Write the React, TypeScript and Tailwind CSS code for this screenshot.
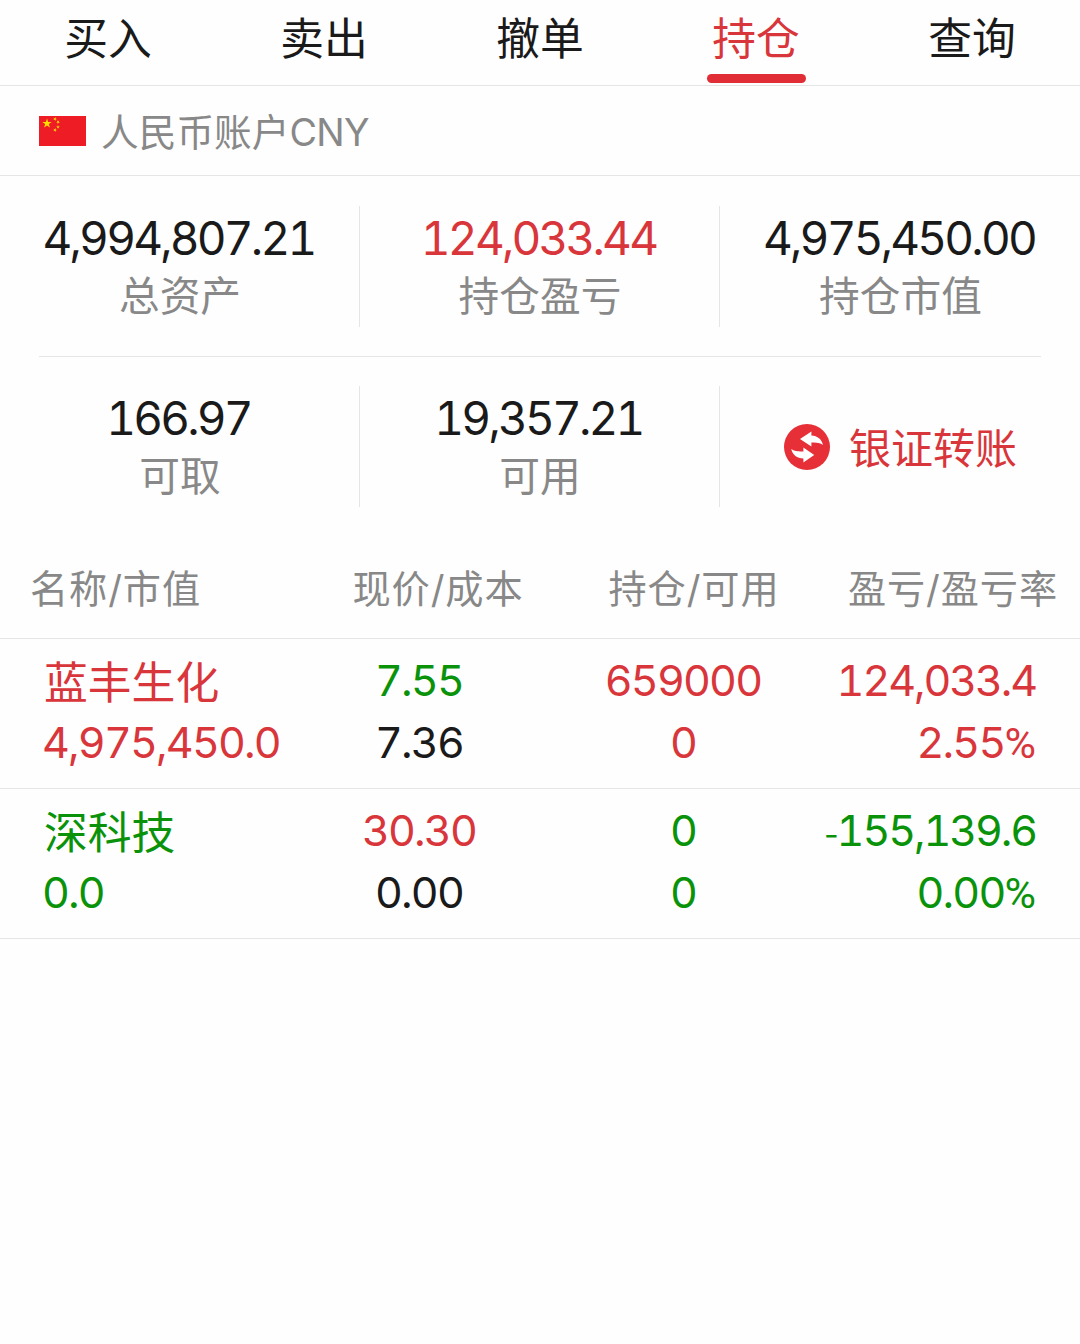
import React from 'react';

const tabs = ['买入', '卖出', '撤单', '持仓', '查询'];

const RED = 'text-[#d9363c]';
const GREEN = 'text-[#0a930a]';
const DARK = 'text-[#1a1a1a]';

const positions = [
  {
    name: '蓝丰生化',
    value: '4,975,450.0',
    price: '7.55',
    cost: '7.36',
    held: '659000',
    available: '0',
    profit: '124,033.4',
    rate: '2.55',
    color: RED,
    priceColor: GREEN,
  },
  {
    name: '深科技',
    value: '0.0',
    price: '30.30',
    cost: '0.00',
    held: '0',
    available: '0',
    profit: '-155,139.6',
    rate: '0.00',
    color: GREEN,
    priceColor: RED,
  },
];

const STAR = 'M0 -1L.225 -.309L.951 -.309L.363 .118L.588 .809L0 .382L-.588 .809L-.363 .118L-.951 -.309L-.225 -.309Z';

const Flag = () => (
  <svg width="47" height="30" viewBox="0 0 47 30" className="shrink-0">
    <rect width="47" height="30" fill="#ee1c25" />
    <g fill="#ffde00">
      <path d={STAR} transform="translate(8 7.5) scale(5)" />
      <path d={STAR} transform="translate(16 3) rotate(20) scale(2)" />
      <path d={STAR} transform="translate(19 6) rotate(40) scale(2)" />
      <path d={STAR} transform="translate(19 11) scale(2)" />
      <path d={STAR} transform="translate(16 14) rotate(20) scale(2)" />
    </g>
  </svg>
);

const TransferIcon = () => (
  <svg width="46" height="46" viewBox="0 0 46 46" className="shrink-0">
    <circle cx="23" cy="23" r="23" fill="#e62f37" />
    <g fill="#fff">
      <path d="M16 15L27.4 7.6V11.4C33.6 11.8 37.8 15 39 21C35.6 18.8 32 18.2 27.4 18.6V22.4Z" />
      <path d="M30.2 31L19.4 38.4V34.6C13 34.2 8.6 31 7.2 25C10.8 27.2 14.6 27.8 19.4 27.4V23.6Z" />
    </g>
  </svg>
);

const Stat = ({ value, label, color = DARK }: { value: string; label: string; color?: string }) => (
  <div className="flex h-[121px] flex-col items-center whitespace-nowrap">
    <div className={`mt-[3px] pr-0.5 text-[46px] leading-[58px] tracking-[-2.8px] tabular-nums ${color}`}>{value}</div>
    <div className="mt-[3px] pl-px text-[40.7px] leading-[53px] text-[#888]">{label}</div>
  </div>
);

const App = () => {
  return (
    <div className="h-[1344px] w-[1080px] overflow-hidden bg-[#fefefe] font-['Inter','Noto_Sans_CJK_SC',sans-serif]">
      <nav className="flex h-[86px] border-b border-[#e5e5e5]">
        {tabs.map((tab) => (
          <div key={tab} className="flex flex-1 flex-col items-center">
            <div className={`h-[74px] text-[43.8px] leading-[79px] ${tab === '持仓' ? RED : DARK}`}>{tab}</div>
            {tab === '持仓' && <div className="h-[9px] w-[99px] rounded-full bg-[#e12d35]" />}
          </div>
        ))}
      </nav>

      <div className="flex h-[90px] items-center border-b border-[#e5e5e5] pl-[39px] text-[#888]">
        <Flag />
        <span className="ml-[15px] pt-1 text-[37.7px]">
          人民币账户<span className="tracking-[-0.7px]">CNY</span>
        </span>
      </div>

      <div className="grid grid-cols-3 divide-x divide-[#e5e5e5] pt-[30px]">
        <Stat value="4,994,807.21" label="总资产" />
        <Stat value="124,033.44" label="持仓盈亏" color={RED} />
        <Stat value="4,975,450.00" label="持仓市值" />
      </div>
      <div className="mx-[39px] mt-[29px] h-px bg-[#e5e5e5]" />
      <div className="grid grid-cols-3 divide-x divide-[#e5e5e5] pt-[29px]">
        <Stat value="166.97" label="可取" />
        <Stat value="19,357.21" label="可用" />
        <div className="flex h-[121px] items-center justify-center pl-px">
          <TransferIcon />
          <span className={`ml-[19px] pt-1 text-[42px] ${RED}`}>银证转账</span>
        </div>
      </div>

      <div className="mt-[31px] flex h-[101px] items-center border-b border-[#e5e5e5] pt-1 pr-[22px] pl-[30px] text-[38.2px] tracking-[0.9px] whitespace-nowrap text-[#888]">
        <div className="w-[290px]">名称/市值</div>
        <div className="w-[236px] text-center">现价/成本</div>
        <div className="w-[276px] text-center">持仓/可用</div>
        <div className="flex-1 text-right">盈亏/盈亏率</div>
      </div>

      {positions.map((row) => (
        <div
          key={row.name}
          className={`flex h-[150px] border-b border-[#e5e5e5] pr-[44px] pl-[42px] pt-2.5 text-[43px] leading-[62px] tracking-[-1.8px] whitespace-nowrap tabular-nums ${row.color}`}
        >
          <div className="w-[277px] shrink-0">
            <div className="h-[62px] pt-1 pl-0.5 text-[43.8px] tracking-normal">{row.name}</div>
            <div>{row.value}</div>
          </div>
          <div className="w-[200px] shrink-0 text-center">
            <div className={row.priceColor}>{row.price}</div>
            <div className={DARK}>{row.cost}</div>
          </div>
          <div className="w-[328px] shrink-0 text-center">
            <div>{row.held}</div>
            <div>{row.available}</div>
          </div>
          <div className="flex min-w-0 flex-1 flex-col items-end">
            <div className="h-[62px] tracking-[-2.1px]">
              {row.profit.startsWith('-') && <span className="text-[32px] leading-none proportional-nums">-</span>}
              {row.profit.replace('-', '')}
            </div>
            <div>
              {row.rate}
              <span className="font-['Roboto'] tracking-normal">%</span>
            </div>
          </div>
        </div>
      ))}
    </div>
  );
};

export default App;
